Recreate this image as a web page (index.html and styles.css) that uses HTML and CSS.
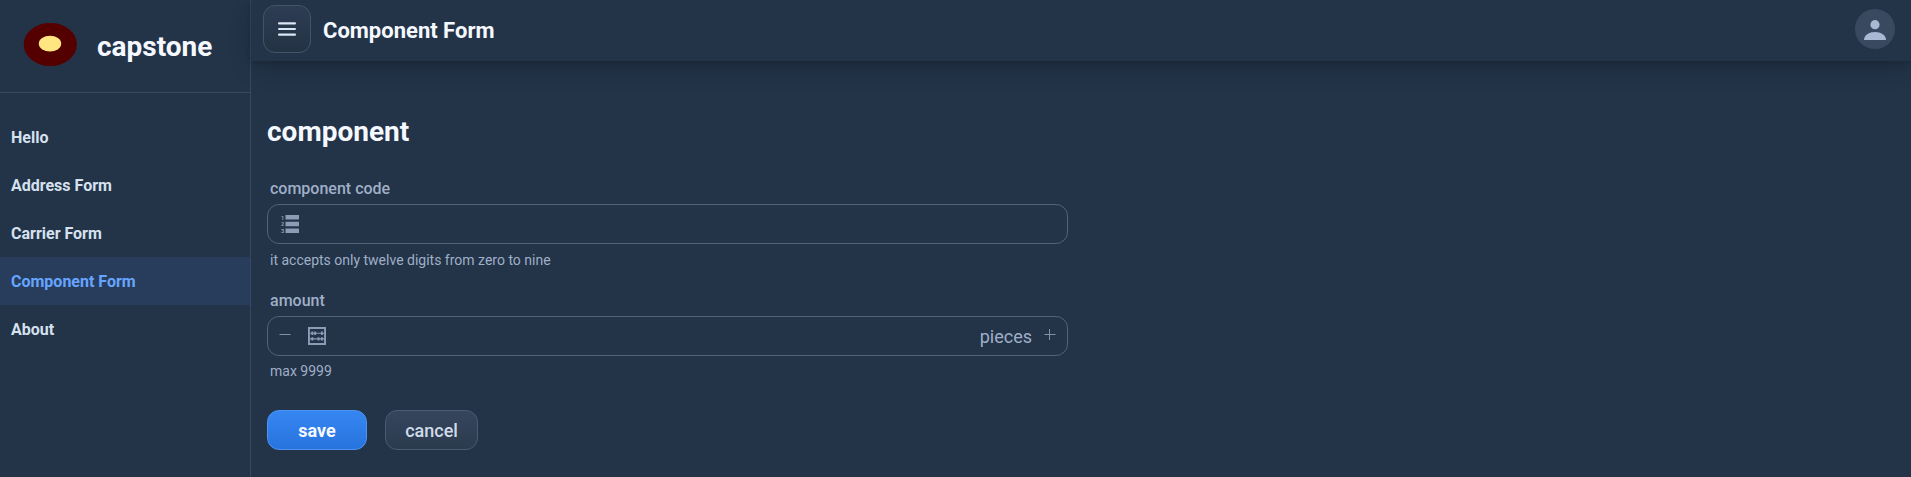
FILE: index.html
```html
<!DOCTYPE html>
<html lang="en">
<head>
<meta charset="utf-8">
<title>Component Form</title>
<link rel="stylesheet" href="styles.css">
</head>
<body>
<div class="app">
  <aside class="drawer">
    <div class="brand">
      <svg class="logo" width="54" height="44" viewBox="0 0 54 44"><ellipse cx="27.300" cy="21.500" rx="26.600" ry="21.600" fill="#550000"/><ellipse cx="27" cy="20.700" rx="11.200" ry="7.900" fill="#ffe680"/></svg>
      <span class="brand-name">capstone</span>
    </div>
    <nav class="nav">
      <a class="nav-item">Hello</a>
      <a class="nav-item">Address Form</a>
      <a class="nav-item">Carrier Form</a>
      <a class="nav-item active">Component Form</a>
      <a class="nav-item">About</a>
    </nav>
  </aside>
  <div class="content">
    <header class="header">
      <button class="toggle" aria-label="Menu"><svg width="18" height="14" viewBox="0 0 18 14"><rect y="0.200" width="18" height="2.200" rx="1"/><rect y="5.900" width="18" height="2.200" rx="1"/><rect y="11.600" width="18" height="2.200" rx="1"/></svg></button>
      <h1 class="title">Component Form</h1>
      <div class="avatar"><svg width="22" height="20" viewBox="0 0 22 20"><circle cx="11" cy="4.700" r="4.600"/><path d="M0 20C0 15 5 12 11 12s11 3 11 8z"/></svg></div>
    </header>
    <main class="form">
      <h2 class="heading">component</h2>
      <label class="label">component code</label>
      <div class="field">
        <svg class="icon" width="18" height="18" viewBox="0 0 16 16"><path d="M4 0h12v4H4zM4 6h12v4H4zM4 12h12v4H4z"/><g class="digits"><text x="0" y="4">1</text><text x="0" y="10">2</text><text x="0" y="16">3</text></g></svg>
      </div>
      <div class="helper">it accepts only twelve digits from zero to nine</div>
      <label class="label second">amount</label>
      <div class="field">
        <svg class="step minus" width="12" height="12" viewBox="0 0 12 12"><path d="M0.500 5.500h11"/></svg>
        <svg class="icon" width="18" height="18" viewBox="0 0 16 16"><path fill-rule="evenodd" d="M0 0h16v16H0zM1.700 1.700v12.600h12.600V1.700z"/><path d="M1 5h14v1H1zM1 10h14v1H1z"/><path d="M3 4h1.700v3H3zM5.500 4h1.700v3H5.500zM11.500 4h1.700v3h-1.700zM3 9h1.700v3H3zM8.500 9h1.700v3H8.500zM11.500 9h1.700v3h-1.700z"/></svg>
        <span class="suffix">pieces</span>
        <svg class="step plus" width="12" height="12" viewBox="0 0 12 12"><path d="M0.500 5.500h11M5.500 0v11"/></svg>
      </div>
      <div class="helper">max 9999</div>
      <div class="actions">
        <button class="button primary">save</button>
        <button class="button secondary">cancel</button>
      </div>
    </main>
  </div>
</div>
</body>
</html>
```
FILE: styles.css
```css
* { box-sizing: border-box; }
body { margin: 0; background: #233348; color: #d6e1f0; font-family: Roboto, "Liberation Sans", sans-serif; overflow: hidden; }
button { font-family: inherit; }
.app { display: flex; height: 477px; }
.drawer { width: 251px; flex: none; border-right: 1px solid #38485f; }
.brand { height: 93px; display: flex; align-items: flex-start; padding: 23px 0 0 23px; border-bottom: 1px solid #38485f; }
.brand-name { margin-left: 20px; margin-top: 6px; font-size: 28px; line-height: 36px; font-weight: 700; color: #f5f9ff; }
.nav { padding-top: 20px; }
.nav-item { display: block; height: 48px; padding: 1px 0 0 11px; line-height: 48px; font-size: 16px; font-weight: 700; }
.active { background: #283d5b; color: #66a5ff; }
.content { flex: 1; }
.header { height: 61px; display: flex; align-items: center; padding: 0 16px 3px 12px; background: #233348; box-shadow: 0 2px 6px -1px rgba(13, 20, 30, .3), 0 8px 24px -4px rgba(13, 20, 30, .3); }
.toggle { width: 48px; height: 48px; padding: 0 0 1px; display: flex; align-items: center; justify-content: center; border: 1px solid #43536a; border-radius: 12px; background: linear-gradient(#2d3c53, #233344); fill: #dce6f4; }
.title { margin: 4px 0 0 12px; font-size: 22px; line-height: 28px; font-weight: 700; color: #f5f9ff; }
.avatar { width: 40px; height: 40px; margin-left: auto; padding-top: 1px; border-radius: 50%; background: #384960; fill: #a8bad3; display: flex; align-items: center; justify-content: center; }
.form { padding: 53px 16px 0; width: 833px; }
.heading { margin: 0; font-size: 28px; line-height: 36px; font-weight: 700; color: #f5f9ff; }
.label { display: block; margin-top: 29px; padding-left: 3px; height: 25px; line-height: 20px; font-size: 16px; font-weight: 500; color: #9fafc7; }
.second { margin-top: 22px; }
.field { height: 40px; width: 801px; border: 1px solid #52637c; border-radius: 12px; display: flex; align-items: center; padding: 0 11px 0 13px; }
.icon { fill: #8c9cb5; flex: none; overflow: visible; }
.digits { font: 700 5px Roboto, sans-serif; }
.step { fill: none; stroke: #8191aa; stroke-width: 1; }
.minus { margin: 0 17px 2px -2px; }
.plus { margin: 0 0 2px 12px; }
.suffix { margin-left: auto; padding-top: 1px; font-size: 18px; color: #9fafc7; }
.helper { padding-left: 3px; margin-top: 7px; height: 18px; line-height: 18px; font-size: 14px; color: #9fafc7; }
.second + .field + .helper { margin-top: 6px; }
.actions { display: flex; gap: 18px; margin-top: 30px; }
.button { height: 40px; padding: 1px 0 0; border-radius: 12px; font-size: 18px; }
.primary { width: 100px; border: 1px solid #4c93f4; background: linear-gradient(#3686f2, #2873de); color: #f5f9ff; font-weight: 700; }
.secondary { width: 93px; border: 1px solid #4b5b72; background: linear-gradient(#36455d, #2b3b4e); color: #d0dbea; font-weight: 500; }
```
